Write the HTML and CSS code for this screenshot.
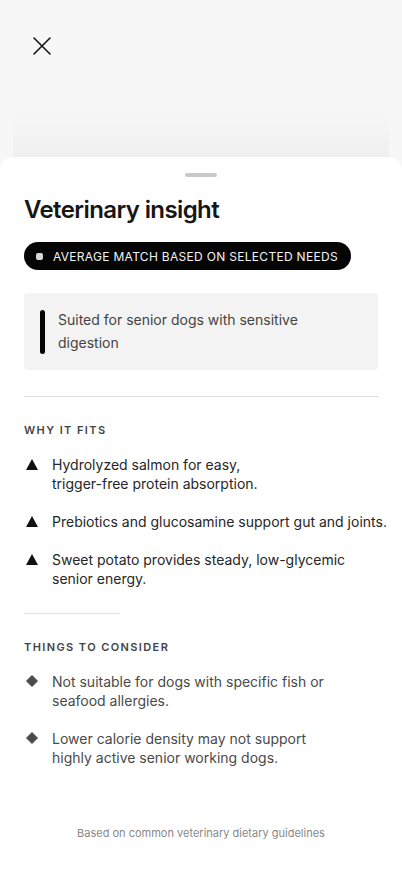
FILE: index.html
```html
<!DOCTYPE html>
<html lang="en">
<head>
  <meta charset="UTF-8">
  <meta name="viewport" content="width=device-width, initial-scale=1.0">
  <title>Veterinary insight</title>
  <link rel="stylesheet" href="styles.css">
</head>
<body>
  <div class="backdrop">
    <button class="close" type="button" aria-label="Close">
      <svg width="18" height="18" viewBox="0 0 18 18">
        <path d="M1 1 L17 17 M17 1 L1 17" stroke="#151515" stroke-width="1.6" stroke-linecap="round" fill="none"/>
      </svg>
    </button>
    <div class="back-card"></div>
  </div>

  <div class="sheet">
    <div class="handle"></div>

    <h1 class="title">Veterinary insight</h1>

    <div class="pill">
      <span class="pill-dot"></span>
      AVERAGE MATCH BASED ON SELECTED NEEDS
    </div>

    <div class="quote">
      <span class="quote-bar"></span>
      <p>Suited for senior dogs with sensitive<br>digestion</p>
    </div>

    <hr class="divider">

    <!-- Why it fits -->
    <div class="label">WHY IT FITS</div>
    <ul class="list">
      <li>
        <svg class="mark" width="12" height="11" viewBox="0 0 12 11"><path d="M6 0 L12 11 L0 11 Z" fill="#111"/></svg>
        <span>Hydrolyzed salmon for easy,<br>trigger-free protein absorption.</span>
      </li>
      <li>
        <svg class="mark" width="12" height="11" viewBox="0 0 12 11"><path d="M6 0 L12 11 L0 11 Z" fill="#111"/></svg>
        <span>Prebiotics and glucosamine support gut and joints.</span>
      </li>
      <li>
        <svg class="mark" width="12" height="11" viewBox="0 0 12 11"><path d="M6 0 L12 11 L0 11 Z" fill="#111"/></svg>
        <span>Sweet potato provides steady, low-glycemic<br>senior energy.</span>
      </li>
    </ul>

    <hr class="divider short">

    <!-- Things to consider -->
    <div class="label">THINGS TO CONSIDER</div>
    <ul class="list muted">
      <li>
        <svg class="mark" width="12" height="12" viewBox="0 0 12 12"><path d="M6 0.5 L11.5 6 L6 11.5 L0.5 6 Z" fill="#4a4a4a" stroke="#4a4a4a" stroke-width="1" stroke-linejoin="round"/></svg>
        <span>Not suitable for dogs with specific fish or<br>seafood allergies.</span>
      </li>
      <li>
        <svg class="mark" width="12" height="12" viewBox="0 0 12 12"><path d="M6 0.5 L11.5 6 L6 11.5 L0.5 6 Z" fill="#4a4a4a" stroke="#4a4a4a" stroke-width="1" stroke-linejoin="round"/></svg>
        <span>Lower calorie density may not support<br>highly active senior working dogs.</span>
      </li>
    </ul>

    <div class="footnote">Based on common veterinary dietary guidelines</div>
  </div>
</body>
</html>
```

FILE: styles.css
```css
body {
  margin: 0;
  font-family: Inter, "Noto Sans", Arial, sans-serif;
  background-color: #f7f7f7;
  color: #222;
}
.backdrop {
  height: 157px;
  display: flex;
  flex-direction: column;
  justify-content: space-between;
}
.close {
  margin: 37px 0 0 33px;
  padding: 0;
  width: 18px;
  height: 18px;
  border: none;
  background: none;
  display: flex;
}
.back-card {
  margin: 0 13px;
  height: 62px;
  border-radius: 12px 12px 0 0;
  background: linear-gradient(180deg, #f8f8f8 0%, #f4f4f4 60%, #efefef 100%);
}
.sheet {
  background: #fff;
  border-radius: 14px 14px 0 0;
  padding: 16px 24px 0 24px;
  min-height: calc(100vh - 157px);
  box-sizing: border-box;
  display: flex;
  flex-direction: column;
}
.handle {
  align-self: center;
  width: 32px;
  height: 4px;
  border-radius: 2px;
  background-color: #c9c9c9;
}
.title {
  margin: 19px 0 0 0;
  font-size: 24px;
  line-height: 28px;
  font-weight: 600;
  letter-spacing: -0.6px;
  color: #161616;
}
.pill {
  margin-top: 18px;
  align-self: flex-start;
  height: 28px;
  padding: 0 13px 0 12px;
  border-radius: 14px;
  background-color: #050505;
  color: #f2f2f2;
  font-size: 12px;
  letter-spacing: 0.3px;
  display: flex;
  align-items: center;
  gap: 10px;
}
.pill-dot {
  width: 7px;
  height: 7px;
  border-radius: 2px;
  background-color: #d8d8d8;
}
.quote {
  margin-top: 23px;
  background-color: #f3f3f3;
  border-radius: 4px;
  padding: 16px 16px;
  display: flex;
  gap: 13px;
}
.quote-bar {
  width: 5px;
  border-radius: 3px;
  background-color: #050505;
  margin: 1px 0 0 0;
}
.quote p {
  margin: -1px 0 0 0;
  font-size: 14px;
  line-height: 23px;
  color: #444;
}
.divider {
  margin: 26px 0 0 0;
  border: none;
  height: 1px;
  background-color: #dcdcdc;
}
.divider.short {
  width: 96px;
  margin-top: 25px;
  background-color: #e2e2e2;
}
.label {
  margin-top: 26px;
  font-size: 11px;
  line-height: 14px;
  font-weight: 600;
  letter-spacing: 1.4px;
  color: #444;
}
.list {
  list-style: none;
  margin: 18px 0 0 0;
  padding: 0;
  display: flex;
  flex-direction: column;
  gap: 19px;
}
.list li {
  display: flex;
  align-items: flex-start;
  font-size: 14px;
  line-height: 19px;
  color: #262626;
  white-space: nowrap;
}
.list .mark {
  flex: none;
  margin: 4px 14px 0 2px;
}
.list.muted li {
  color: #4a4a4a;
}
.list.muted .mark {
  margin-top: 3px;
}
.footnote {
  margin-top: 59px;
  text-align: center;
  font-size: 11px;
  line-height: 14px;
  color: #888;
}
```
